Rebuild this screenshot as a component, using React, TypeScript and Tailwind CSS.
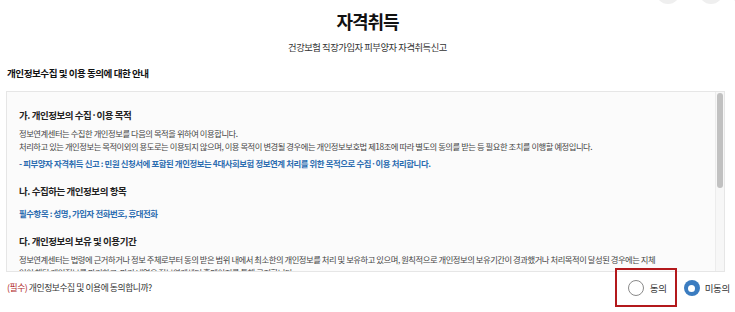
const body = "text-[8.3px] leading-[13px] tracking-[-0.45px] text-[#444]";
const subhead = "text-[9.5px] leading-[12px] font-bold tracking-[-0.45px] text-[#222]";
const blue = "text-[8.4px] leading-[13px] font-bold tracking-[-0.4px] text-[#2b6cb0]";

function Radio({ checked }: { checked: boolean }) {
  return checked ? (
    <span className="flex h-4 w-4 items-center justify-center rounded-full bg-[#3b7cc0]">
      <span className="h-[7px] w-[7px] rounded-full bg-white" />
    </span>
  ) : (
    <span className="h-4 w-4 rounded-full border border-[#8a8a8a] bg-white" />
  );
}

export default function App() {
  return (
    <div className="relative h-[312px] w-[735px] overflow-hidden bg-white font-['Noto_Sans_CJK_KR','Noto_Sans',sans-serif]">
      {/* faint buttons peeking at the top right */}
      <div className="absolute -top-[20px] left-[656px] h-6 w-6 rounded-full bg-[#efefef]" />
      <div className="absolute -top-[20px] left-[699px] h-6 w-6 rounded-full bg-[#efefef]" />
      <div className="absolute -top-[20px] left-[731px] h-6 w-6 rounded-full bg-[#efefef]" />

      <div className="pt-[9px] text-center">
        <h1 className="text-[18px] leading-[24px] font-bold tracking-[-1px] text-[#111]">자격취득</h1>
        <p className="mt-[7px] text-[9.3px] leading-[14px] tracking-[-0.45px] text-[#333]">
          건강보험 직장가입자 피부양자 자격취득신고
        </p>
      </div>

      <h2 className="mt-[12px] pl-[7px] text-[9.6px] leading-[14px] font-bold tracking-[-0.5px] text-[#111]">
        개인정보수집 및 이용 동의에 대한 안내
      </h2>

      <div className="ml-[6px] mr-[10px] mt-[11px] flex h-[181px] border border-[#e6e6e6] bg-[#fbfbfb]">
        <div className="flex-1 overflow-hidden pl-[12px] pt-[17px]">
          <h3 className={subhead}>가. 개인정보의 수집·이용 목적</h3>
          <p className={`mt-[6px] ${body}`}>
            정보연계센터는 수집한 개인정보를 다음의 목적을 위하여 이용합니다.
            <br />
            처리하고 있는 개인정보는 목적이외의 용도로는 이용되지 않으며, 이용 목적이 변경될 경우에는 개인정보보호법 제18조에 따라 별도의 동의를 받는 등 필요한 조치를 이행할 예정입니다.
          </p>
          <p className={`mt-[4px] ${blue}`}>
            - 피부양자 자격취득 신고 : 민원 신청서에 포함된 개인정보는 4대사회보험 정보연계 처리를 위한 목적으로 수집·이용 처리합니다.
          </p>

          <h3 className={`mt-[15px] ${subhead}`}>나. 수집하는 개인정보의 항목</h3>
          <p className={`mt-[10px] ${blue}`}>필수항목 : 성명, 가입자 전화번호, 휴대전화</p>

          <h3 className={`mt-[15px] ${subhead}`}>다. 개인정보의 보유 및 이용기간</h3>
          <p className={`mt-[6px] ${body}`}>
            정보연계센터는 법령에 근거하거나 정보 주체로부터 동의 받은 범위 내에서 최소한의 개인정보를 처리 및 보유하고 있으며, 원칙적으로 개인정보의 보유기간이 경과했거나 처리목적이 달성된 경우에는 지체
            <br />
            없이 해당 개인정보를 파기하고, 파기 내역은 정보연계센터 홈페이지를 통해 공지합니다.
          </p>
        </div>
        <div className="w-[9px] border-l border-[#ececec] bg-[#f7f7f7] pt-px">
          <div className="ml-px h-[95px] w-[6px] rounded-full bg-[#c1c1c1]" />
        </div>
      </div>

      <div className="flex h-[32px] items-center pl-[7px] pr-[5px]">
        <p className="text-[8.8px] tracking-[-0.45px] text-[#333]">
          <span className="text-[#b02a2a]">(필수)</span> 개인정보수집 및 이용에 동의합니까?
        </p>
        <div className="ml-auto flex items-center">
          <label className="relative flex items-center gap-[6px]">
            <span className="absolute -bottom-[11px] -left-[13px] -right-[10px] -top-[12px] border-[2.5px] border-[#b3191c]" />
            <Radio checked={false} />
            <span className="text-[9.5px] tracking-[-0.3px] text-[#333]">동의</span>
          </label>
          <label className="ml-[17px] flex items-center gap-[5px]">
            <Radio checked={true} />
            <span className="text-[9.5px] tracking-[-0.3px] text-[#333]">미동의</span>
          </label>
        </div>
      </div>
    </div>
  );
}
